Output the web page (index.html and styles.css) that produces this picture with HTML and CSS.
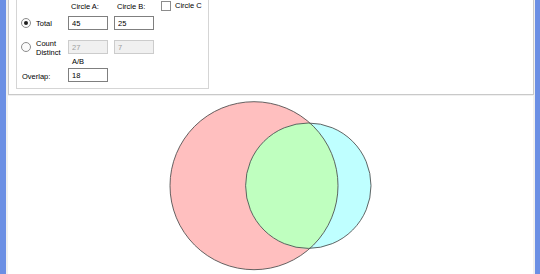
FILE: index.html
```html
<!DOCTYPE html>
<html lang="en">
<head>
    <meta charset="UTF-8">
    <title>Venn</title>
    <link rel="stylesheet" href="styles.css">
</head>
<body>
<div class="window">
    <div class="frame-side"></div>
    <div class="client">
        <div class="top-panel">
            <div class="groupbox">
                <div class="opts">
                    <div class="cell"></div>
                    <div class="head">Circle A:</div>
                    <div class="head">Circle B:</div>
                    <div class="check-cell"><span class="check"></span>Circle C</div>

                    <div class="radio-cell"><span class="radio on"></span>Total</div>
                    <input class="box" type="text" value="45">
                    <input class="box" type="text" value="25">
                    <div class="cell"></div>

                    <div class="radio-cell spacer"></div>
                    <div class="cell spacer"></div>
                    <div class="cell spacer"></div>
                    <div class="cell spacer"></div>

                    <div class="radio-cell"><span class="radio"></span><span class="two-line">Count<br>Distinct</span></div>
                    <input class="box" type="text" value="27" disabled>
                    <input class="box" type="text" value="7" disabled>
                    <div class="cell"></div>

                    <div class="cell"></div>
                    <div class="head ab">A/B</div>
                    <div class="cell"></div>
                    <div class="cell"></div>

                    <div class="plain-label">Overlap:</div>
                    <input class="box" type="text" value="18">
                    <div class="cell"></div>
                    <div class="cell"></div>
                </div>
            </div>
        </div>
        <div class="gap-line"></div>
        <div class="diagram">
            <svg width="524" height="177" viewBox="0 0 524 177">
                <defs>
                    <clipPath id="clipA">
                        <circle cx="246" cy="89.7" r="84"/>
                    </clipPath>
                </defs>
                <circle cx="246" cy="89.7" r="84" fill="#ffbfbf"/>
                <circle cx="300.3" cy="89.7" r="62.7" fill="#bfffff"/>
                <circle cx="300.3" cy="89.7" r="62.7" fill="#bfffbf" clip-path="url(#clipA)"/>
                <circle cx="246" cy="89.7" r="84" fill="none" stroke="#4a4a4a" stroke-width="1" stroke-opacity="0.85"/>
                <circle cx="300.3" cy="89.7" r="62.7" fill="none" stroke="#4a4a4a" stroke-width="1" stroke-opacity="0.85"/>
            </svg>
        </div>
    </div>
    <div class="frame-side right"></div>
</div>
</body>
</html>
```

FILE: styles.css
```css
body {
    margin: 0;
    padding: 0;
    width: 540px;
    height: 274px;
    overflow: hidden;
    font-family: 'Liberation Sans', Arial, sans-serif;
    font-size: 7.5px;
    color: #000000;
    background-color: #ffffff;
}

.window {
    display: flex;
    height: 274px;
}

.frame-side {
    width: 6px;
    background-color: #6b8fe4;
    flex: none;
}

.frame-side.right {
    width: 5px;
}

.client {
    flex: 1;
    background-color: #f0f0f0;
    padding: 0 1px 0 2px;
    display: flex;
    flex-direction: column;
}

.top-panel {
    background-color: #ffffff;
    border: 1px solid #c9c9c9;
    border-top: none;
    height: 95px;
    box-sizing: border-box;
    padding: 0 0 5px 7px;
    display: flex;
    align-items: flex-end;
}

.groupbox {
    width: 193px;
    height: 90px;
    box-sizing: border-box;
    border: 1px solid #d5d5d5;
    border-top: none;
}

.opts {
    display: grid;
    grid-template-columns: 45px 40px 40px auto;
    grid-template-rows: 17px 14px 10px 14px 14px 14px;
    column-gap: 6px;
}

.head {
    padding: 3px 0 0 3px;
    line-height: 9px;
}

.head.ab {
    padding: 3px 0 0 4px;
}

.check-cell {
    display: flex;
    align-items: flex-start;
    padding-top: 2px;
    margin-left: 1px;
    line-height: 9px;
}

.check {
    width: 8px;
    height: 8px;
    border: 1px solid #8c8c8c;
    background-color: #ffffff;
    margin-right: 4px;
    flex: none;
}

.radio-cell {
    display: flex;
    align-items: center;
    padding-left: 4px;
}

.radio {
    width: 10px;
    height: 10px;
    border: 1px solid #8c8c8c;
    border-radius: 50%;
    background-color: #fbfbfb;
    margin-right: 5px;
    box-sizing: border-box;
    flex: none;
    display: flex;
    align-items: center;
    justify-content: center;
}

.radio.on::after {
    content: '';
    width: 4px;
    height: 4px;
    border-radius: 50%;
    background-color: #1e1e1e;
}

.two-line {
    line-height: 9px;
    margin-top: 1px;
}

.plain-label {
    display: flex;
    align-items: center;
    padding-left: 5px;
    padding-top: 3px;
}

.box {
    width: 40px;
    height: 14px;
    box-sizing: border-box;
    border: 1px solid #7f7f7f;
    background-color: #ffffff;
    font-family: 'Liberation Sans', Arial, sans-serif;
    font-size: 7.5px;
    color: #000000;
    padding: 0 0 0 3px;
    margin: 0;
    outline: none;
}

.box:disabled {
    background-color: #f0f0f0;
    border-color: #cccccc;
    color: #a0a0a0;
}

.gap-line {
    height: 1px;
}

.diagram {
    flex: 1;
    background-color: #ffffff;
    margin-right: 1px;
    overflow: hidden;
}

.diagram svg {
    display: block;
}
```
